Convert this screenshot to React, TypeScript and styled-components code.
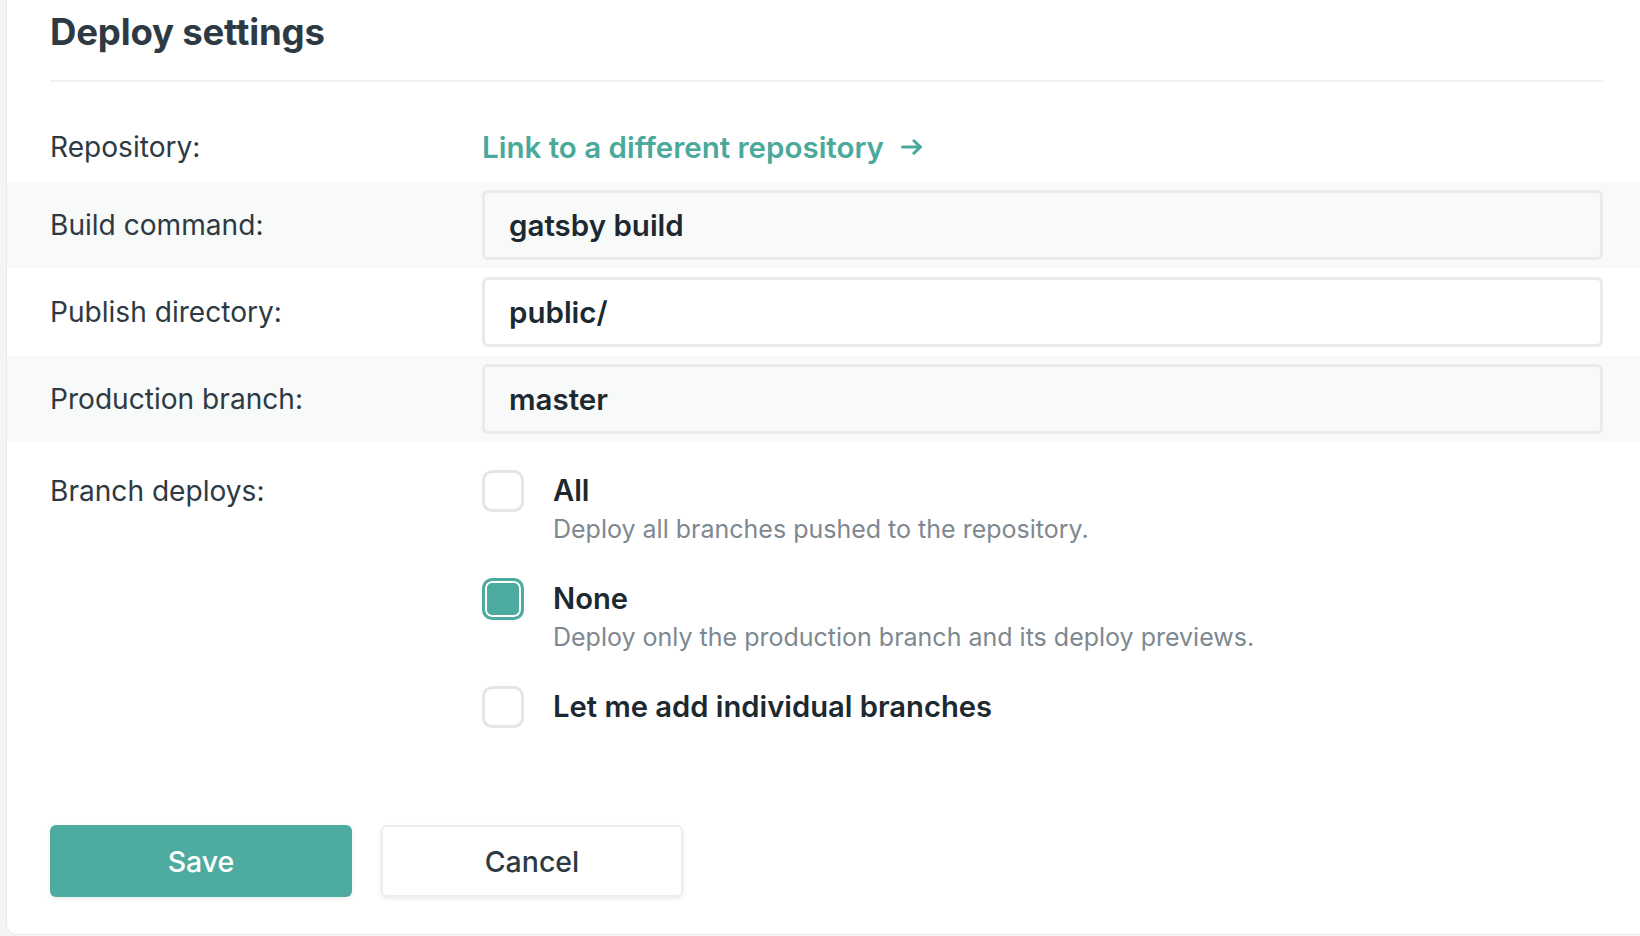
import React from "react";
import styled, { createGlobalStyle } from "styled-components";

const GlobalStyle = createGlobalStyle`
  html, body {
    margin: 0;
    padding: 0;
    background: #f4f5f6;
    overflow: hidden;
  }
  body {
    font-family: Inter, "Noto Sans", "Liberation Sans", sans-serif;
    -webkit-font-smoothing: antialiased;
  }
  * { box-sizing: border-box; }
`;

const Page = styled.div`
  width: 1640px;
  height: 936px;
  padding-left: 6px;
`;

const Card = styled.section`
  height: 935px;
  background: #ffffff;
  border-left: 1px solid #e8eaec;
  border-bottom: 1px solid #e8eaec;
  border-bottom-left-radius: 10px;
  padding-top: 10px;
  display: flex;
  flex-direction: column;
`;

const Header = styled.header`
  margin: 0 37px 0 43px;
  border-bottom: 2px solid #f2f3f3;
  padding-bottom: 26px;
`;

const Title = styled.h1`
  margin: 0;
  font-size: 36.6px;
  line-height: 44px;
  font-weight: 700;
  color: #2e3a43;
  letter-spacing: -0.2px;
`;

const Row = styled.div<{ $shaded?: boolean; $top?: number; $bottom?: number }>`
  display: grid;
  grid-template-columns: 432px 1fr;
  align-items: center;
  padding: ${(p) => p.$top ?? 8}px 37px ${(p) => p.$bottom ?? 8}px 43px;
  background: ${(p) => (p.$shaded ? "#f8f9f9" : "transparent")};
`;

const Label = styled.label<{ $alignTop?: boolean }>`
  font-size: 28.1px;
  line-height: 42px;
  color: #2e3a43;
  font-weight: 400;
  align-self: ${(p) => (p.$alignTop ? "start" : "center")};
`;

const LinkBox = styled.div`
  height: 70px;
  display: flex;
  align-items: center;
`;

const RepoLink = styled.a`
  display: inline-flex;
  align-items: center;
  gap: 17px;
  color: #4aa99b;
  font-size: 29.5px;
  font-weight: 600;
  text-decoration: none;
  cursor: pointer;
`;

const Input = styled.input`
  height: 70px;
  width: 100%;
  border: 3px solid #e9ebeb;
  border-radius: 6px;
  background: transparent;
  padding: 0 24px;
  font-family: inherit;
  font-size: 29.5px;
  font-weight: 600;
  color: #1c2930;
  outline: none;
`;

const Options = styled.div`
  display: flex;
  flex-direction: column;
  gap: 32px;
`;

const Option = styled.label`
  display: flex;
  align-items: flex-start;
  gap: 29px;
  cursor: pointer;
`;

const Box = styled.span<{ $checked?: boolean }>`
  flex: none;
  width: 42px;
  height: 42px;
  border-radius: 10px;
  border: 3px solid ${(p) => (p.$checked ? "#4dab9f" : "#e3e5e6")};
  background: ${(p) => (p.$checked ? "#4dab9f" : "#ffffff")};
  box-shadow: ${(p) => (p.$checked ? "inset 0 0 0 2px #ffffff" : "none")};
`;

const OptionText = styled.span`
  display: flex;
  flex-direction: column;
`;

const OptionTitle = styled.span`
  font-size: 29.2px;
  line-height: 42px;
  font-weight: 600;
  color: #1c2930;
`;

const OptionDesc = styled.span`
  font-size: 25px;
  line-height: 34px;
  color: #7e888f;
`;

const Actions = styled.div`
  margin-top: auto;
  margin-bottom: 37px;
  padding-left: 43px;
  display: flex;
  gap: 29px;
`;

const Button = styled.button<{ $primary?: boolean }>`
  width: 302px;
  height: 72px;
  border-radius: 6px;
  font-family: inherit;
  font-size: 28.5px;
  font-weight: 500;
  cursor: pointer;
  border: ${(p) => (p.$primary ? "none" : "2px solid #eceeef")};
  background: ${(p) => (p.$primary ? "#4dab9f" : "#ffffff")};
  color: ${(p) => (p.$primary ? "#ffffff" : "#2e3a43")};
  box-shadow: 0 2px 5px rgba(0, 0, 0, 0.08);
`;

const Arrow = () => (
  <svg width="22" height="16" viewBox="0 0 22 16" fill="none">
    <path
      d="M1.5 8H19.5M13 1.8L19.5 8L13 14.2"
      stroke="#4aa99b"
      strokeWidth="3"
      strokeLinecap="round"
      strokeLinejoin="round"
    />
  </svg>
);

const options = [
  { title: "All", desc: "Deploy all branches pushed to the repository.", checked: false },
  { title: "None", desc: "Deploy only the production branch and its deploy previews.", checked: true },
  { title: "Let me add individual branches", desc: "", checked: false },
];

export default function App() {
  return (
    <>
      <GlobalStyle />
      <Page>
        <Card>
          <Header>
            <Title>Deploy settings</Title>
          </Header>
          <Row $top={30} $bottom={0}>
            <Label>Repository:</Label>
            <LinkBox>
              <RepoLink>
                Link to a different repository
                <Arrow />
              </RepoLink>
            </LinkBox>
          </Row>
          <Row $shaded>
            <Label>Build command:</Label>
            <Input defaultValue="gatsby build" />
          </Row>
          <Row $top={9} $bottom={9}>
            <Label>Publish directory:</Label>
            <Input defaultValue="public/" />
          </Row>
          <Row $shaded>
            <Label>Production branch:</Label>
            <Input defaultValue="master" />
          </Row>
          <Row $top={28} $bottom={0}>
            <Label $alignTop>Branch deploys:</Label>
            <Options>
              {options.map((o) => (
                <Option key={o.title}>
                  <Box $checked={o.checked} />
                  <OptionText>
                    <OptionTitle>{o.title}</OptionTitle>
                    {o.desc && <OptionDesc>{o.desc}</OptionDesc>}
                  </OptionText>
                </Option>
              ))}
            </Options>
          </Row>
          <Actions>
            <Button $primary>Save</Button>
            <Button>Cancel</Button>
          </Actions>
        </Card>
      </Page>
    </>
  );
}
